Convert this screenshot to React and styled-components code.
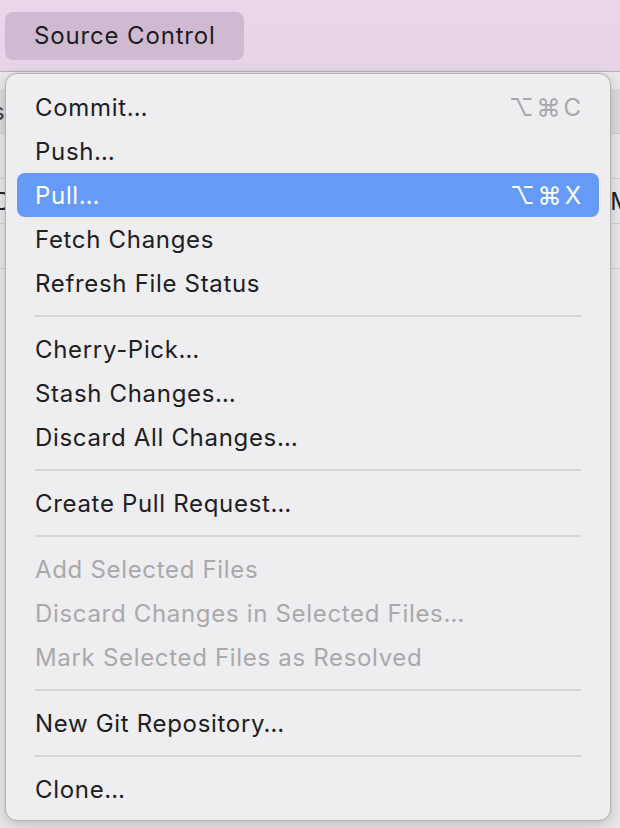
import styled, { createGlobalStyle } from 'styled-components';

const Global = createGlobalStyle`
  html, body {
    margin: 0;
    padding: 0;
    background: #e7e6e8;
  }
  body {
    font-family: Inter, "Noto Sans", "Liberation Sans", sans-serif;
    -webkit-font-smoothing: antialiased;
  }
`;

const Page = styled.div`
  position: relative;
  width: 620px;
  height: 828px;
  overflow: hidden;
  background: #e9e8ea;
`;

const MenuBar = styled.div`
  height: 72px;
  display: flex;
  align-items: center;
  padding-left: 5px;
  background: linear-gradient(180deg, #e9d6ea 0%, #e6d3e8 100%);
  border-bottom: 1px solid #b9b0bb;
  box-sizing: border-box;
`;

const BarItem = styled.div`
  height: 48px;
  padding: 0 28px 0 29px;
  display: flex;
  align-items: center;
  border-radius: 8px;
  background: #d0bad2;
  color: #1d1d1f;
  font-size: 24px;
  letter-spacing: 0.85px;
`;

/* the window behind the open menu */
const Behind = styled.div`
  display: flex;
  flex-direction: column;
`;

const BehindToolbar = styled.div`
  height: 44px;
  margin-top: 17px;
  background: #dcdbdd;
  border-bottom: 1px solid #cfcfd1;
  display: flex;
  justify-content: space-between;
  align-items: center;
  font-size: 24px;
  color: #444;
  margin-left: -8px;
`;

const BehindRow = styled.div`
  height: 44px;
  border-bottom: 1px solid #d3d3d5;
  display: flex;
  justify-content: space-between;
  align-items: center;
  font-size: 24px;
  color: #222;
  margin-left: -6px;
  margin-right: -12px;
`;

const Menu = styled.div`
  position: absolute;
  left: 5px;
  top: 73px;
  width: 606px;
  box-sizing: border-box;
  padding: 11px 11px 9px 11px;
  background: #eeedf0;
  border: 1px solid #b4b3b6;
  border-radius: 12px;
  box-shadow: 0 4px 14px rgba(0, 0, 0, 0.18), 0 0 0 0.5px rgba(0, 0, 0, 0.05);
  display: flex;
  flex-direction: column;
`;

const Item = styled.div`
  height: 44px;
  display: flex;
  align-items: center;
  justify-content: space-between;
  padding: 0 15px 0 18px;
  border-radius: 8px;
  font-size: 24px;
  letter-spacing: 0.68px;
  color: ${p => (p.$active ? '#ffffff' : p.$disabled ? '#a9a9ab' : '#202022')};
  background: ${p => (p.$active ? '#659bf6' : 'transparent')};
`;

const Shortcut = styled.span`
  font-size: 24px;
  letter-spacing: 3px;
  color: ${p => (p.$active ? '#ffffff' : '#a7a7a9')};
`;

const Separator = styled.div`
  height: 22px;
  display: flex;
  align-items: center;
  padding: 0 18px 0 18px;

  &::after {
    content: '';
    flex: 1;
    height: 2px;
    background: #d6d5d8;
  }
`;

const groups = [
  [
    { label: 'Commit…', shortcut: '⌥⌘C' },
    { label: 'Push…' },
    { label: 'Pull…', shortcut: '⌥⌘X', active: true },
    { label: 'Fetch Changes' },
    { label: 'Refresh File Status' },
  ],
  [
    { label: 'Cherry-Pick…' },
    { label: 'Stash Changes…' },
    { label: 'Discard All Changes…' },
  ],
  [{ label: 'Create Pull Request…' }],
  [
    { label: 'Add Selected Files', disabled: true },
    { label: 'Discard Changes in Selected Files…', disabled: true },
    { label: 'Mark Selected Files as Resolved', disabled: true },
  ],
  [{ label: 'New Git Repository…' }],
  [{ label: 'Clone…' }],
];

export default function App() {
  return (
    <Page>
      <Global />
      <MenuBar>
        <BarItem>Source Control</BarItem>
      </MenuBar>
      <Behind>
        <BehindToolbar>
          <span>s</span>
          <span />
        </BehindToolbar>
        <BehindRow />
        <BehindRow>
          <span>D</span>
          <span>M</span>
        </BehindRow>
        <BehindRow />
      </Behind>
      <Menu>
        {groups.map((group, gi) => (
          <div key={gi}>
            {gi > 0 && <Separator />}
            {group.map(item => (
              <Item key={item.label} $active={item.active} $disabled={item.disabled}>
                <span>{item.label}</span>
                {item.shortcut && <Shortcut $active={item.active}>{item.shortcut}</Shortcut>}
              </Item>
            ))}
          </div>
        ))}
      </Menu>
    </Page>
  );
}
